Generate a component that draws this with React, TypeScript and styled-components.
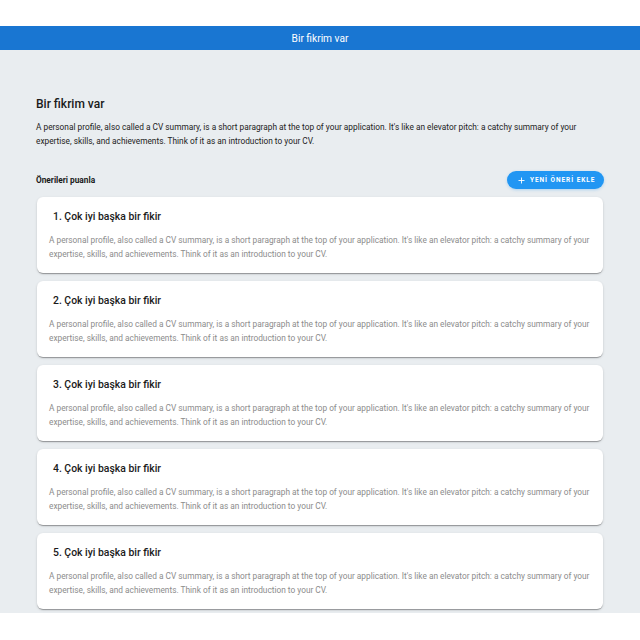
import styled, { createGlobalStyle } from "styled-components";

const GlobalStyle = createGlobalStyle`
  html, body {
    margin: 0;
    padding: 0;
    background: #ffffff;
  }
  body {
    font-family: Roboto, "Liberation Sans", Arial, sans-serif;
    -webkit-font-smoothing: antialiased;
  }
  * {
    box-sizing: border-box;
  }
`;

const BODY_TEXT =
  "A personal profile, also called a CV summary, is a short paragraph at the top of your application. It's like an elevator pitch: a catchy summary of your expertise, skills, and achievements. Think of it as an introduction to your CV.";

type Idea = {
  id: number;
  title: string;
  text: string;
};

const ideas: Idea[] = [1, 2, 3, 4, 5].map((n) => ({
  id: n,
  title: `${n}. Çok iyi başka bir fikir`,
  text: BODY_TEXT,
}));

const PlusIcon = () => (
  <svg width="7" height="7" viewBox="0 0 14 14" aria-hidden>
    <path d="M7 1v12M1 7h12" stroke="#fff" strokeWidth="1.8" fill="none" />
  </svg>
);

const App = () => {
  return (
    <Page>
      <GlobalStyle />
      <TopBar>Bir fikrim var</TopBar>
      <Main>
        <PageTitle>Bir fikrim var</PageTitle>
        <Intro>{BODY_TEXT}</Intro>
        <SectionRow>
          <SectionLabel>Önerileri puanla</SectionLabel>
          <AddButton type="button">
            <PlusIcon />
            <span>YENİ ÖNERİ EKLE</span>
          </AddButton>
        </SectionRow>
        <CardList>
          {ideas.map((idea) => (
            <Card key={idea.id}>
              <CardTitle>{idea.title}</CardTitle>
              <CardText>{idea.text}</CardText>
            </Card>
          ))}
        </CardList>
      </Main>
    </Page>
  );
};

export default App;

const Page = styled.div`
  padding-top: 26px;
  min-height: 640px;
  background: #ffffff;
`;

const TopBar = styled.header`
  height: 24px;
  background-color: #1976d2;
  color: #ffffff;
  display: flex;
  align-items: center;
  justify-content: center;
  font-size: 10.2px;
  font-weight: 400;
`;

const Main = styled.main`
  background-color: #e9edf0;
  padding: 47px 36px 4px 36px;
`;

const PageTitle = styled.h1`
  margin: 0;
  font-size: 12px;
  line-height: 14.4px;
  font-weight: 500;
  color: #1a1a1a;
`;

const Intro = styled.p`
  margin: 9px 0 0 0;
  font-size: 8.3px;
  line-height: 14px;
  color: #222222;
`;

const SectionRow = styled.div`
  margin-top: 23px;
  display: flex;
  align-items: center;
  justify-content: space-between;
`;

const SectionLabel = styled.h2`
  margin: 0;
  font-size: 8.3px;
  font-weight: 700;
  color: #1a1a1a;
`;

const AddButton = styled.button`
  height: 18px;
  width: 97px;
  padding: 0 6px 0 11px;
  border: none;
  border-radius: 9px;
  background-color: #2196f3;
  color: #ffffff;
  display: flex;
  align-items: center;
  gap: 5px;
  font-family: inherit;
  font-size: 6.5px;
  font-weight: 700;
  letter-spacing: 0.95px;
  white-space: nowrap;
  box-shadow: 0 1px 3px rgba(33, 150, 243, 0.3);
  cursor: pointer;
`;

const CardList = styled.div`
  margin-top: 8px;
  display: flex;
  flex-direction: column;
  gap: 8px;
  padding: 0 1px;
`;

const Card = styled.article`
  height: 76px;
  background: #ffffff;
  border-radius: 6px;
  padding: 12px 12px 12px 12px;
  box-shadow: 0 2px 1px -1px rgba(0, 0, 0, 0.2), 0 1px 1px 0 rgba(0, 0, 0, 0.14),
    0 1px 3px 0 rgba(0, 0, 0, 0.12);
`;

const CardTitle = styled.h3`
  margin: 0 0 0 4px;
  font-size: 10.4px;
  line-height: 15px;
  font-weight: 500;
  color: #1a1a1a;
`;

const CardText = styled.p`
  margin: 9px 0 0 0;
  font-size: 8.3px;
  line-height: 14px;
  color: #8c8c8c;
`;
